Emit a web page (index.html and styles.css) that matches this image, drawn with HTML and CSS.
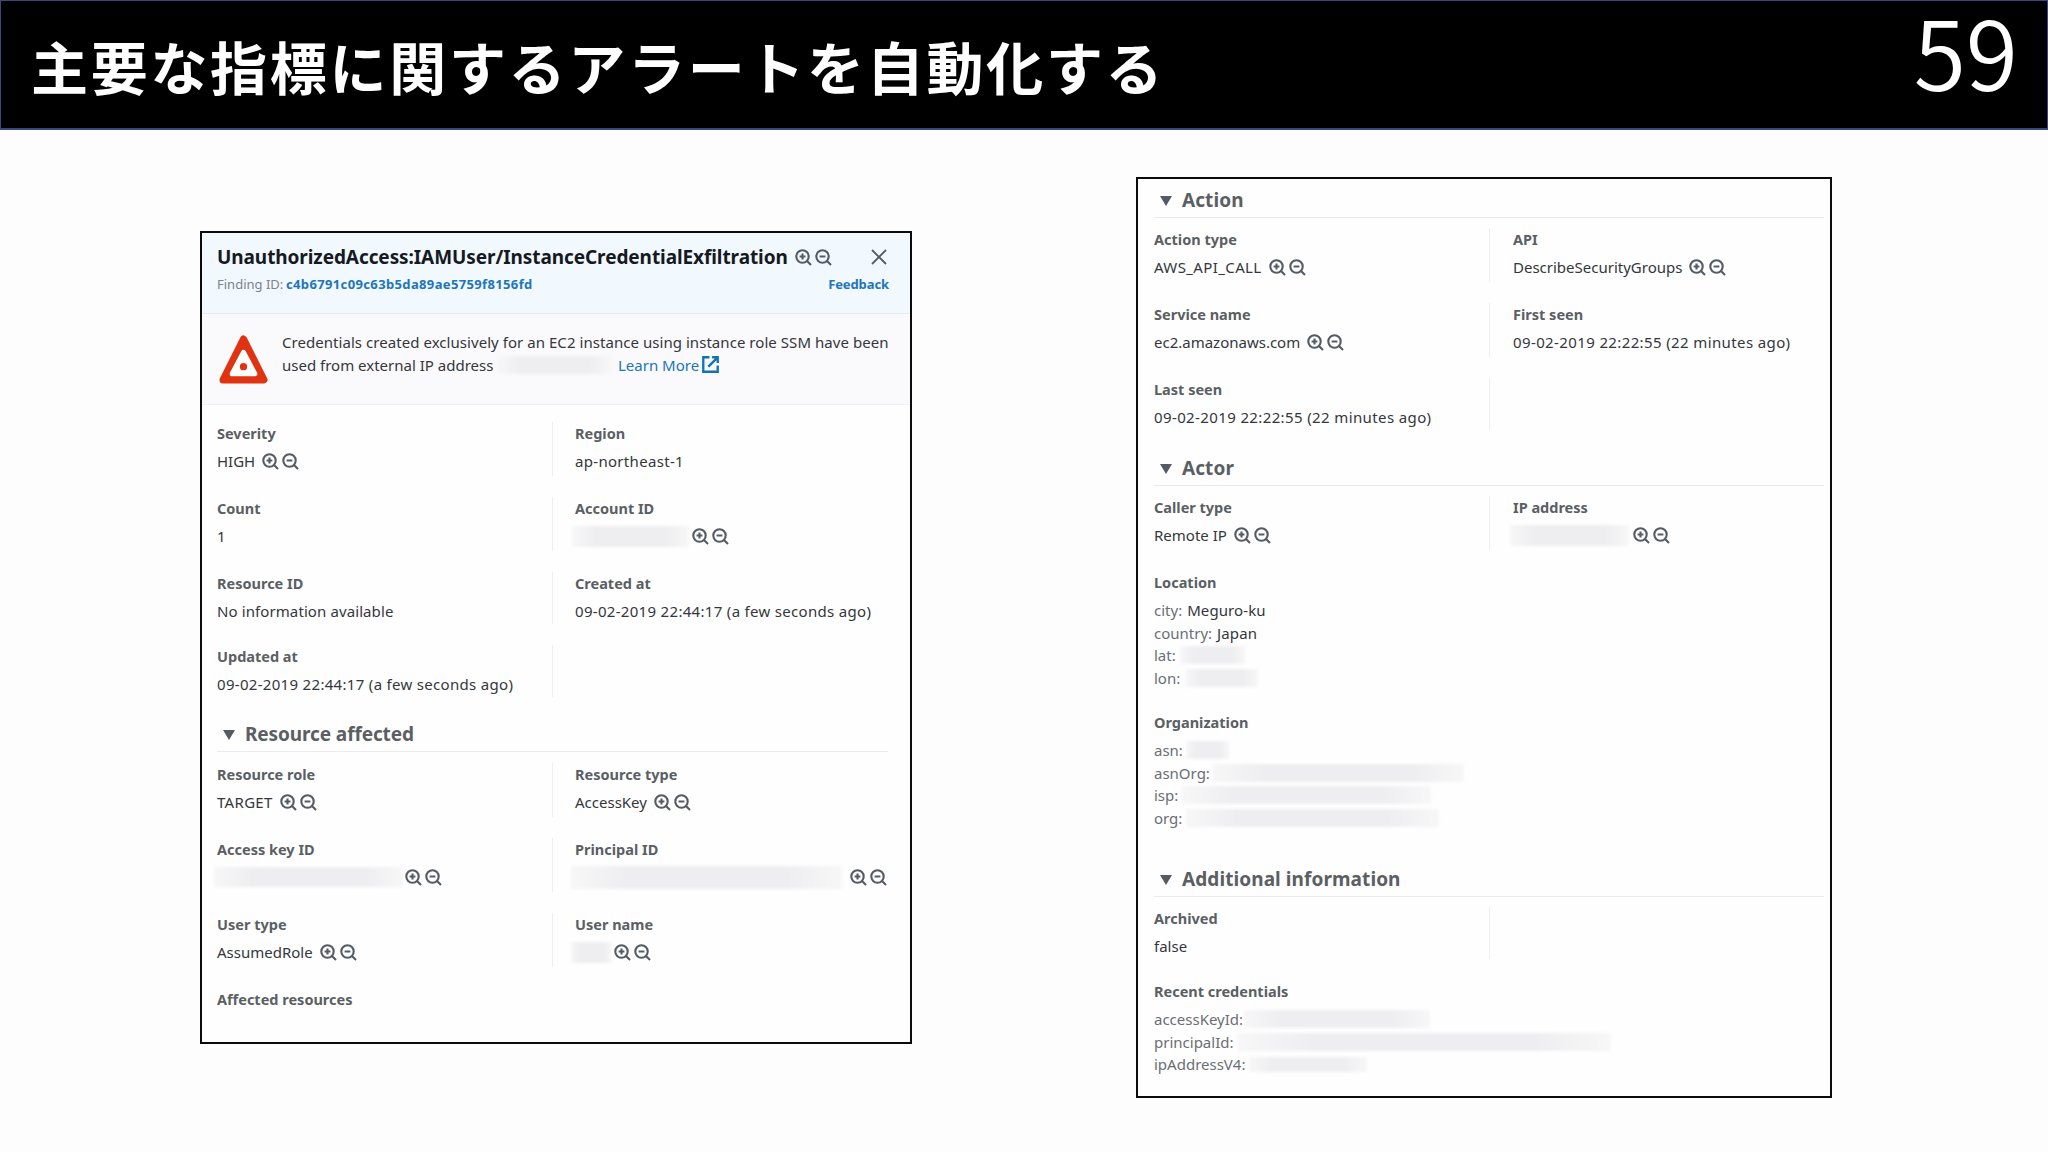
FILE: index.html
```
<!DOCTYPE html>
<html lang="ja">
<head>
    <meta charset="UTF-8">
    <title>主要な指標に関するアラートを自動化する</title>
    <link rel="stylesheet" href="styles.css">
</head>
<body>
    <svg class="sprite" width="0" height="0">
        <symbol id="zoom-in" viewBox="0 0 17 17">
            <circle cx="7.5" cy="7.5" r="6.2"/>
            <path d="M12 12l4 4M4.6 7.5h5.8M7.5 4.6v5.8"/>
        </symbol>
        <symbol id="zoom-out" viewBox="0 0 17 17">
            <circle cx="7.5" cy="7.5" r="6.2"/>
            <path d="M12 12l4 4M4.6 7.5h5.8"/>
        </symbol>
    </svg>

    <header class="slide-header">
        <h1>主要な指標に関するアラートを自動化する</h1>
        <span class="page">59</span>
    </header>

    <main class="slide">
        <section class="panel finding">
            <div class="finding-head">
                <div class="row">
                    <h2>UnauthorizedAccess:IAMUser/InstanceCredentialExfiltration</h2>
                    <span class="zoom"><svg><use href="#zoom-in"/></svg><svg><use href="#zoom-out"/></svg></span>
                    <svg class="close" viewBox="0 0 16 16"><path d="M1 1l14 14M15 1L1 15"/></svg>
                </div>
                <div class="row sub">
                    <span class="finding-id">Finding ID:</span>
                    <a class="hash">c4b6791c09c63b5da89ae5759f8156fd</a>
                    <a class="feedback">Feedback</a>
                </div>
            </div>
            <div class="alert">
                <svg class="warning" viewBox="0 0 48 48">
                    <path d="M24 4L44 44H4Z" fill="#df3312" stroke="#df3312" stroke-width="7" stroke-linejoin="round"/>
                    <path d="M24 17L35 38H13Z" fill="#fff" stroke="#fff" stroke-width="5" stroke-linejoin="round"/>
                    <circle cx="24" cy="31" r="3.6" fill="#df3312"/>
                </svg>
                <div class="alert-text">
                    <div class="line wide">Credentials created exclusively for an EC2 instance using instance role SSM have been</div>
                    <div class="line"><span class="used">used from external IP address</span><i class="redact r-ext"></i><a class="learn">Learn More</a>
                        <svg class="external" viewBox="0 0 16 16"><path d="M7 1.2H1.2v13.6h13.6V9M9.5 1.2h5.3v5.3M14.5 1.5L6 10"/></svg>
                    </div>
                </div>
            </div>

            <div class="grid first">
                <div class="cell"><b>Severity</b><p>HIGH<span class="zoom"><svg><use href="#zoom-in"/></svg><svg><use href="#zoom-out"/></svg></span></p></div>
                <div class="cell"><b>Region</b><p class="loose">ap-northeast-1</p></div>
                <div class="cell"><b>Count</b><p>1</p></div>
                <div class="cell"><b>Account ID</b><p><i class="redact r-account"></i><span class="zoom flush"><svg><use href="#zoom-in"/></svg><svg><use href="#zoom-out"/></svg></span></p></div>
                <div class="cell short"><b>Resource ID</b><p class="semi">No information available</p></div>
                <div class="cell short"><b>Created at</b><p class="loose">09-02-2019 22:44:17 (a few seconds ago)</p></div>
                <div class="cell short"><b>Updated at</b><p class="loose">09-02-2019 22:44:17 (a few seconds ago)</p></div>
                <div class="cell short"></div>
            </div>

            <h3>Resource affected</h3>
            <div class="grid">
                <div class="cell"><b>Resource role</b><p class="loose">TARGET<span class="zoom"><svg><use href="#zoom-in"/></svg><svg><use href="#zoom-out"/></svg></span></p></div>
                <div class="cell"><b>Resource type</b><p>AccessKey<span class="zoom"><svg><use href="#zoom-in"/></svg><svg><use href="#zoom-out"/></svg></span></p></div>
                <div class="cell"><b>Access key ID</b><p><i class="redact r-key"></i><span class="zoom flush"><svg><use href="#zoom-in"/></svg><svg><use href="#zoom-out"/></svg></span></p></div>
                <div class="cell"><b>Principal ID</b><p><i class="redact r-principal"></i><span class="zoom flush"><svg><use href="#zoom-in"/></svg><svg><use href="#zoom-out"/></svg></span></p></div>
                <div class="cell"><b>User type</b><p>AssumedRole<span class="zoom"><svg><use href="#zoom-in"/></svg><svg><use href="#zoom-out"/></svg></span></p></div>
                <div class="cell"><b>User name</b><p><i class="redact r-user"></i><span class="zoom flush"><svg><use href="#zoom-in"/></svg><svg><use href="#zoom-out"/></svg></span></p></div>
                <div class="cell"><b>Affected resources</b></div>
            </div>
        </section>

        <section class="panel details">
            <h3>Action</h3>
            <div class="grid action">
                <div class="cell"><b>Action type</b><p class="looser">AWS_API_CALL<span class="zoom"><svg><use href="#zoom-in"/></svg><svg><use href="#zoom-out"/></svg></span></p></div>
                <div class="cell"><b>API</b><p>DescribeSecurityGroups<span class="zoom"><svg><use href="#zoom-in"/></svg><svg><use href="#zoom-out"/></svg></span></p></div>
                <div class="cell"><b>Service name</b><p>ec2.amazonaws.com<span class="zoom"><svg><use href="#zoom-in"/></svg><svg><use href="#zoom-out"/></svg></span></p></div>
                <div class="cell"><b>First seen</b><p class="looser">09-02-2019 22:22:55 (22 minutes ago)</p></div>
                <div class="cell short"><b>Last seen</b><p class="looser">09-02-2019 22:22:55 (22 minutes ago)</p></div>
                <div class="cell short"></div>
            </div>

            <h3>Actor</h3>
            <div class="grid">
                <div class="cell"><b>Caller type</b><p>Remote IP<span class="zoom"><svg><use href="#zoom-in"/></svg><svg><use href="#zoom-out"/></svg></span></p></div>
                <div class="cell"><b>IP address</b><p><i class="redact r-ip"></i><span class="zoom flush"><svg><use href="#zoom-in"/></svg><svg><use href="#zoom-out"/></svg></span></p></div>
            </div>
            <div class="list location">
                <b>Location</b>
                <p><span>city:</span> <em>Meguro-ku</em></p>
                <p><span>country:</span> <em>Japan</em></p>
                <p><span>lat:</span><i class="redact r-lat"></i></p>
                <p><span>lon:</span><i class="redact r-lon"></i></p>
            </div>
            <div class="list organization">
                <b>Organization</b>
                <p><span>asn:</span><i class="redact r-asn"></i></p>
                <p><span>asnOrg:</span><i class="redact r-asnorg"></i></p>
                <p><span>isp:</span><i class="redact r-isp"></i></p>
                <p><span>org:</span><i class="redact r-org"></i></p>
            </div>

            <h3>Additional information</h3>
            <div class="grid">
                <div class="cell short"><b>Archived</b><p>false</p></div>
                <div class="cell short"></div>
            </div>
            <div class="list">
                <b>Recent credentials</b>
                <p><span>accessKeyId:</span><i class="redact r-akid"></i></p>
                <p><span>principalId:</span><i class="redact r-pid"></i></p>
                <p><span>ipAddressV4:</span><i class="redact r-v4"></i></p>
            </div>
        </section>
    </main>
</body>
</html>
```
FILE: styles.css
```
* {
    box-sizing: border-box;
}

body {
    margin: 0;
    width: 2048px;
    height: 1152px;
    overflow: hidden;
    background: #fdfdfd;
    color: #34373c;
    font-family: "Noto Sans", "Open Sans", sans-serif;
    font-size: 15px;
    line-height: 22.5px;
}

h1, h2, h3, p {
    margin: 0;
}

svg {
    fill: none;
    display: block;
    flex: none;
}

.sprite {
    position: absolute;
}

/* slide title bar */
.slide-header {
    display: flex;
    justify-content: space-between;
    height: 130px;
    padding: 0 29px 0 30px;
    background: #000;
    border: 1px solid #39477c;
    border-bottom-width: 2px;
    color: #fff;
    font-family: "Noto Sans CJK JP", sans-serif;
}

.slide-header h1 {
    font-size: 57px;
    font-weight: 700;
    letter-spacing: 2.7px;
    line-height: 129px;
}

.page {
    font-size: 95px;
    font-weight: 350;
    line-height: 97px;
}

.slide {
    display: flex;
    align-items: flex-start;
}

.panel {
    border: 2px solid #0b0b0b;
    background: #fefefe;
}

.finding {
    width: 712px;
    height: 813px;
    margin: 101px 0 0 200px;
}

.details {
    width: 696px;
    height: 921px;
    margin: 47px 0 0 224px;
    padding-top: 7px;
}

.row, .line, p {
    display: flex;
    align-items: center;
    white-space: nowrap;
}

/* finding header */
.finding-head {
    height: 81px;
    padding: 11px 21px 0 15px;
    background: #f1f8fe;
    border-bottom: 1px solid #e6ebf0;
}

.finding-head .row {
    height: 26px;
}

h2 {
    width: 571px;
    color: #16191f;
    font-size: 19px;
    font-weight: 700;
    letter-spacing: -0.08px;
}

.close {
    width: 16px;
    height: 16px;
    margin-left: auto;
    margin-right: 2px;
    stroke: #545b64;
    stroke-width: 1.8;
}

.finding-head .sub {
    height: 28px;
    color: #7b8389;
    font-size: 13px;
}

.finding-id {
    width: 69px;
}

a {
    color: #2176b8;
}

.hash, .feedback {
    font-weight: 700;
}

.hash {
    letter-spacing: 0.36px;
}

.feedback {
    margin-left: auto;
    letter-spacing: -0.1px;
}

.alert {
    display: flex;
    height: 91px;
    padding: 17px 0 0 17px;
    background: #faf9fb;
    border-bottom: 1px solid #f0f0f2;
}

.warning {
    width: 49px;
    height: 49px;
    margin-top: 4px;
}

.alert-text {
    margin-left: 14px;
}

.wide {
    letter-spacing: 0.05px;
}

.used {
    width: 215px;
}

.learn {
    width: 84px;
    margin-left: 6px;
}

.external {
    width: 17px;
    height: 17px;
    stroke: #0f73b7;
    stroke-width: 2.2;
}

/* plus / minus filter icons */
.zoom {
    display: flex;
    gap: 3px;
    margin-left: 7px;
}

.zoom svg {
    width: 17px;
    height: 17px;
    stroke: #545b64;
    stroke-width: 2.1;
}

.flush {
    margin-left: 3px;
}

/* two column field grid */
.grid {
    display: grid;
    grid-template-columns: 351px 1fr;
}

.finding .grid {
    grid-template-columns: 350px 1fr;
}

.grid.first {
    margin-top: 17px;
}

.cell {
    height: 75px;
    padding-left: 15px;
}

.cell.short {
    height: 73px;
}

/* divider between the columns */
.cell:nth-child(even) {
    padding-left: 23px;
    background: linear-gradient(#ededf2, #ededf2) no-repeat left top / 1px 54px;
}

.cell.short:nth-child(even) {
    background-size: 1px 52px;
}

.cell b, .list b {
    display: block;
    color: #5a5f64;
    font-size: 14.5px;
    font-weight: 700;
    line-height: 22px;
}

.cell p {
    height: 22px;
    margin-top: 6px;
}

.semi {
    letter-spacing: 0.1px;
}

.loose {
    letter-spacing: 0.31px;
}

.looser {
    letter-spacing: 0.38px;
}

.details .cell:nth-child(odd) {
    padding-left: 16px;
}

.details .cell:nth-child(even) {
    padding-left: 24px;
}

.action .cell.short {
    height: 76px;
}

h3 {
    position: relative;
    height: 34px;
    margin: 0 22px 11px 15px;
    padding-left: 28px;
    border-bottom: 1px solid #ebebef;
    color: #5a5f64;
    font-size: 19px;
    font-weight: 700;
    letter-spacing: -0.1px;
    line-height: 33px;
}

h3::before {
    content: "";
    position: absolute;
    left: 6px;
    top: 12px;
    border: 6.5px solid transparent;
    border-top: 10px solid #545b64;
    border-bottom: 0;
}

.details h3 {
    height: 32px;
    margin: 0 6px 10px 16px;
    letter-spacing: 0.08px;
    line-height: 29px;
}

.details h3::before {
    top: 10px;
}

/* key / value lists */
.list {
    padding-left: 16px;
}

.list p {
    height: 22.5px;
}

.list b + p {
    margin-top: 6px;
}

.list span {
    color: #6a6f75;
    margin-right: 4px;
}

.list em {
    margin-left: 1px;
    font-style: normal;
    letter-spacing: 0.1px;
}

.location {
    height: 140px;
}

.organization {
    height: 154px;
}

/* blurred out values */
.redact {
    flex: none;
    height: 18px;
    background: linear-gradient(90deg, #f7f7f8, #eeeef0 20%, #eeeef0 80%, #f7f7f8);
    filter: blur(1.5px);
}

.r-ext { width: 115px; }
.r-account { width: 117px; height: 21px; margin-left: -3px; }
.r-key { width: 189px; height: 20px; margin-left: -3px; margin-right: -1px; }
.r-principal { width: 271px; height: 23px; margin-left: -4px; margin-right: 5px; }
.r-user { width: 41px; height: 21px; margin-left: -4px; margin-right: -1px; }
.r-ip { width: 119px; height: 21px; margin-left: -3px; margin-right: 1px; }
.r-lat { width: 65px; }
.r-lon { width: 73px; margin-left: 1px; }
.r-asn { width: 43px; margin-left: -1px; }
.r-asnorg { width: 252px; margin-left: -2px; }
.r-isp { width: 249px; }
.r-org { width: 253px; }
.r-akid { width: 186px; margin-left: -3px; }
.r-pid { width: 374px; }
.r-v4 { width: 118px; height: 15px; }
```
